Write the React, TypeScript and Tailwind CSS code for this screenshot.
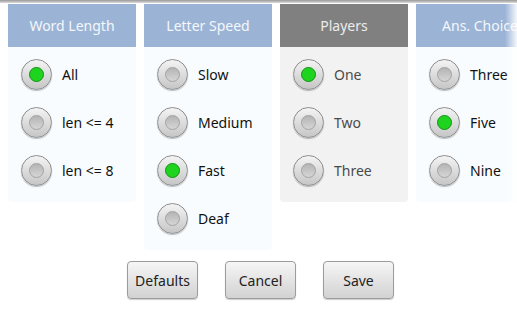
import { useState } from 'react'

interface Group {
    title: string
    options: string[]
    selected: number
    dimmed?: boolean
}

const groups: Group[] = [
    { title: 'Word Length', options: ['All', 'len <= 4', 'len <= 8'], selected: 0 },
    { title: 'Letter Speed', options: ['Slow', 'Medium', 'Fast', 'Deaf'], selected: 2 },
    { title: 'Players', options: ['One', 'Two', 'Three'], selected: 0, dimmed: true },
    { title: 'Ans. Choice', options: ['Three', 'Five', 'Nine'], selected: 1 },
]

const Radio = ({ checked }: { checked: boolean }) => (
    <div className="w-[31px] h-[31px] shrink-0 rounded-full border border-[#8e8e8e] bg-linear-to-b from-[#f4f4f4] to-[#c6c6c6] flex items-center justify-center shadow-[0_1px_1px_rgba(0,0,0,0.25)]">
        {checked ? (
            <div className="w-[15px] h-[15px] rounded-full bg-[#1fd41f] border border-[#149214]" />
        ) : (
            <div className="w-[15px] h-[15px] rounded-full bg-linear-to-b from-[#b4b4b4] to-[#d6d6d6] border border-[#a2a2a2]" />
        )}
    </div>
)

const OptionColumn = ({ group }: { group: Group }) => {
    const [selected, setSelected] = useState(group.selected)

    return (
        <div className="w-[128px] shrink-0 flex flex-col">
            <div
                className={`h-[43px] flex items-center justify-center text-[14px] ${
                    group.dimmed ? 'bg-[#808080] text-[#ececec]' : 'bg-[#9bb4d6] text-[#f4f7fb]'
                }`}
            >
                <span className="whitespace-nowrap">{group.title}</span>
            </div>
            <div
                className={`pt-[3px] pb-[8px] rounded-b-[4px] ${
                    group.dimmed ? 'bg-[#f2f2f2]' : 'bg-[#f8fcfe]'
                }`}
            >
                {group.options.map((opt, i) => (
                    <button
                        key={opt}
                        type="button"
                        onClick={() => setSelected(i)}
                        className="h-[48px] w-full flex items-center pl-[13px] gap-[10px] text-left"
                    >
                        <Radio checked={selected === i} />
                        <span
                            className={`text-[14px] whitespace-nowrap ${
                                group.dimmed ? 'text-[#4a4a4a]' : 'text-[#111]'
                            }`}
                        >
                            {opt}
                        </span>
                    </button>
                ))}
            </div>
        </div>
    )
}

export default function App() {
    return (
        <div className="relative w-[517px] h-[310px] overflow-hidden bg-white font-['Noto_Sans','Open_Sans',sans-serif]">
            {/* top shadow strip */}
            <div className="h-[3px] bg-linear-to-b from-[#9a9a9a] to-[#dcdcdc]" />

            <div className="flex items-start gap-2 px-2 pt-[1px]">
                {groups.map((g) => (
                    <OptionColumn key={g.title} group={g} />
                ))}
            </div>

            {/* fading edge on the right */}
            <div className="absolute right-0 top-[3px] w-[12px] h-[254px] bg-linear-to-r from-white/0 to-white/90" />

            {/* buttons */}
            <div className="flex justify-center gap-[27px] mt-[11px] pl-[4px]">
                {['Defaults', 'Cancel', 'Save'].map((label) => (
                    <button
                        key={label}
                        type="button"
                        className="w-[71px] h-[38px] rounded-[4px] border border-[#9c9c9c] bg-linear-to-b from-[#f6f6f6] to-[#d2d2d2] text-[14px] text-[#222] shadow-[0_1px_1px_rgba(0,0,0,0.2)]"
                    >
                        {label}
                    </button>
                ))}
            </div>
        </div>
    )
}
